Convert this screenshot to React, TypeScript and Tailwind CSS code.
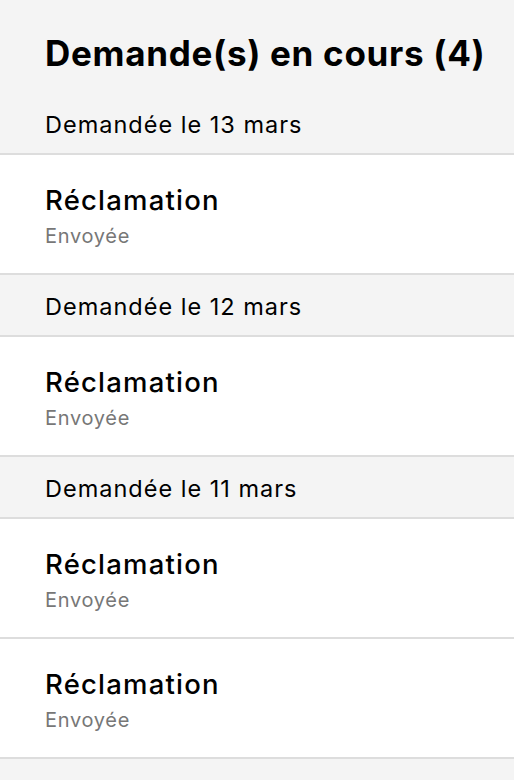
import React from "react";

interface Request {
  date?: string;
  title: string;
  status: string;
}

const requests: Request[] = [
  { date: "Demandée le 13 mars", title: "Réclamation", status: "Envoyée" },
  { date: "Demandée le 12 mars", title: "Réclamation", status: "Envoyée" },
  { date: "Demandée le 11 mars", title: "Réclamation", status: "Envoyée" },
  { title: "Réclamation", status: "Envoyée" },
];

const App: React.FC = () => {
  return (
    <div
      className="min-h-[780px] w-full bg-[#f4f4f4] text-black"
      style={{ fontFamily: "Inter, 'Noto Sans', sans-serif" }}
    >
      <div className="h-[93px] flex items-center px-[45px] pt-[14px]">
        <h1 className="text-[35px] font-bold tracking-[0.7px] leading-none whitespace-nowrap">
          Demande(s) en cours (4)
        </h1>
      </div>

      {requests.map((r, i) => (
        <div key={i}>
          {r.date && (
            <div className="h-[62px] flex items-center px-[45px] pt-[4px] border-b-2 border-[#dddddd] bg-[#f4f4f4]">
              <span className="text-[23.5px] leading-none tracking-[1px]">{r.date}</span>
            </div>
          )}
          <div className="h-[120px] flex flex-col px-[45px] pt-[28px] bg-white border-b-2 border-[#dddddd]">
            <div className="text-[27.5px] font-medium leading-[34px] tracking-[1.2px]">{r.title}</div>
            <div className="text-[20px] text-[#777777] leading-[26px] mt-[6px] tracking-[0.7px]">
              {r.status}
            </div>
          </div>
        </div>
      ))}
    </div>
  );
};

export default App;
